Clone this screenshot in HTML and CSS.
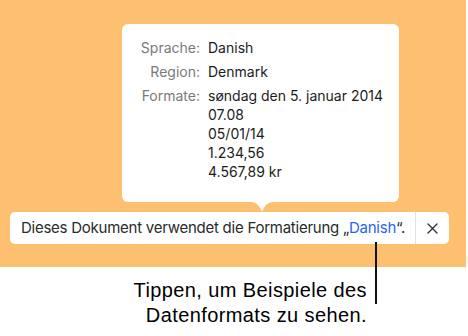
FILE: index.html
```html
<!DOCTYPE html>
<html lang="de">
<head>
    <meta charset="UTF-8">
    <title>Formatierung</title>
    <link rel="stylesheet" href="styles.css">
</head>
<body>
    <div class="stage">
        <div class="popover">
            <div class="info">
                <span class="label">Sprache:</span>
                <span class="value">Danish</span>
                <span class="label">Region:</span>
                <span class="value">Denmark</span>
                <span class="label">Formate:</span>
                <span class="value">søndag den 5. januar 2014<br>07.08<br>05/01/14<br>1.234,56<br>4.567,89 kr</span>
            </div>
        </div>
        <svg class="arrow" width="24" height="10" viewBox="0 0 24 10">
            <path d="M0 0 C6 0 9 3 11 8 C11.5 9.5 12.5 9.5 13 8 C15 3 18 0 24 0 Z" fill="#fff"/>
        </svg>
        <div class="bar">
            <div class="message">Dieses Dokument verwendet die Formatierung „<span class="link">Danish<span class="callout"></span></span>“.</div>
            <button class="close" aria-label="Schließen">
                <svg width="11" height="11" viewBox="0 0 11 11">
                    <path d="M1 1 L10 10 M10 1 L1 10" stroke="#333" stroke-width="1.4" stroke-linecap="round"/>
                </svg>
            </button>
        </div>
    </div>
    <p class="caption">Tippen, um Beispiele des<br>Datenformats zu sehen.</p>
</body>
</html>
```
FILE: styles.css
```css
body {
    margin: 0;
    background: #fff;
    font-family: Inter, "Liberation Sans", sans-serif;
    width: 468px;
}
.stage {
    width: 466px;
    height: 267px;
    background: #fdbf70;
    padding-top: 24px;
    box-sizing: border-box;
    display: flex;
    flex-direction: column;
}
.popover {
    margin-left: 122px;
    width: 277px;
    height: 178px;
    background: #fff;
    border-radius: 6px;
    padding-top: 14px;
    box-sizing: border-box;
}
.info {
    display: grid;
    grid-template-columns: 78px auto;
    column-gap: 8px;
    row-gap: 5px;
    font-size: 14px;
    line-height: 19px;
}
.label {
    text-align: right;
    color: #7a7a7a;
}
.value {
    color: #1c1c1c;
}
.arrow {
    display: block;
    margin-left: 250px;
}
.bar {
    margin-left: 10px;
    width: 439px;
    height: 32px;
    background: #fff;
    border-radius: 5px;
    display: flex;
    align-items: stretch;
}
.message {
    flex: 1;
    padding-left: 11px;
    font-size: 15px;
    letter-spacing: -0.25px;
    line-height: 32px;
    white-space: nowrap;
    color: #2a2a2a;
}
.link {
    color: #2b64f0;
    position: relative;
}
.callout {
    position: absolute;
    left: 26px;
    top: 24px;
    width: 2px;
    height: 62px;
    background: #111;
}
.close {
    width: 34px;
    border: none;
    border-left: 1px solid #e2e2e2;
    background: none;
    padding: 0;
    display: flex;
    align-items: center;
    justify-content: center;
}
.caption {
    margin: 11px 101px 0 0;
    text-align: right;
    font-family: "Liberation Sans", Arial, sans-serif;
    font-size: 20px;
    letter-spacing: 0.4px;
    line-height: 25px;
    color: #000;
}
```
